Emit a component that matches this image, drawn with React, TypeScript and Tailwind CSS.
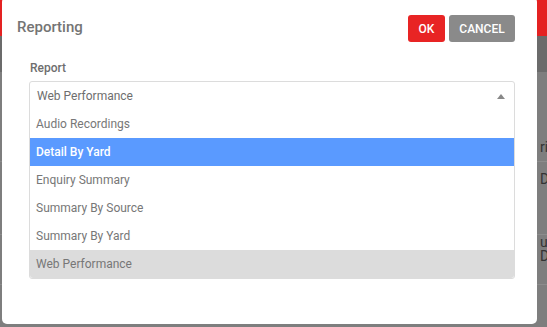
import { useState } from 'react';

const reports = [
  'Audio Recordings',
  'Detail By Yard',
  'Enquiry Summary',
  'Summary By Source',
  'Summary By Yard',
  'Web Performance',
];

export default function App() {
  const [selected] = useState('Web Performance');
  const [hovered] = useState('Detail By Yard');

  return (
    <div className="relative w-[547px] h-[327px] overflow-hidden bg-[#7e7e7e] font-['Roboto',sans-serif]">
      {/* dimmed page behind the dialog */}
      <div className="flex flex-col">
        <div className="h-[36px] bg-[#e42222]" />
        <div className="h-[36px] bg-[#6b6b6b]" />
        <div className="h-[90px] border-b border-[#8c8c8c] pt-[65px] pl-[540px] text-[14px] text-[#333]">ri</div>
        <div className="h-[73px] border-b border-[#8c8c8c] pt-[7px] pl-[540px] text-[14px] text-[#333]">D</div>
        <div className="h-[50px] border-b border-[#8c8c8c] pl-[540px] text-[14px] leading-[14px] text-[#333]">u<br />D</div>
      </div>

      <div className="absolute left-[2px] top-[-3px] w-[535px] h-[327px] rounded-[5px] bg-white">
        <div className="flex items-center justify-between pl-[15px] pr-[22px] pt-[18px]">
          <h1 className="text-[15px] font-medium text-[#747474] -mt-[3px]">Reporting</h1>
          <div className="flex gap-[4px]">
            <button className="h-[27px] w-[37px] rounded-[3px] bg-[#e82424] text-white text-[12px] font-medium">
              OK
            </button>
            <button className="h-[27px] w-[66px] rounded-[3px] bg-[#8a8a8a] text-white text-[12px] font-medium">
              CANCEL
            </button>
          </div>
        </div>

        <div className="pl-[27px] pr-[22px] pt-[18px]">
          <label className="block text-[12px] leading-[16px] font-medium text-[#6e6e6e] mb-[5px] pl-[1px]">Report</label>
          <div className="rounded-[3px] border border-[#dcdcdc]">
            <div className="flex items-center justify-between h-[28px] pl-[7px] pr-[9px] text-[12px] text-[#6e6e6e]">
              <span>{selected}</span>
              <svg width="8" height="5" viewBox="0 0 8 5">
                <path d="M0 5 L4 0 L8 5 Z" fill="#888" />
              </svg>
            </div>
            <ul>
              {reports.map((r) => (
                <li
                  key={r}
                  className={
                    r === hovered
                      ? 'h-[28px] flex items-center pl-[6px] text-[12px] font-medium text-white bg-[#5a9aff]'
                      : r === selected
                      ? 'h-[28px] flex items-center pl-[6px] text-[12px] text-[#777] bg-[#dcdcdc] rounded-b-[3px]'
                      : 'h-[28px] flex items-center pl-[6px] text-[12px] text-[#777]'
                  }
                >
                  {r}
                </li>
              ))}
            </ul>
          </div>
        </div>
      </div>
    </div>
  );
}
